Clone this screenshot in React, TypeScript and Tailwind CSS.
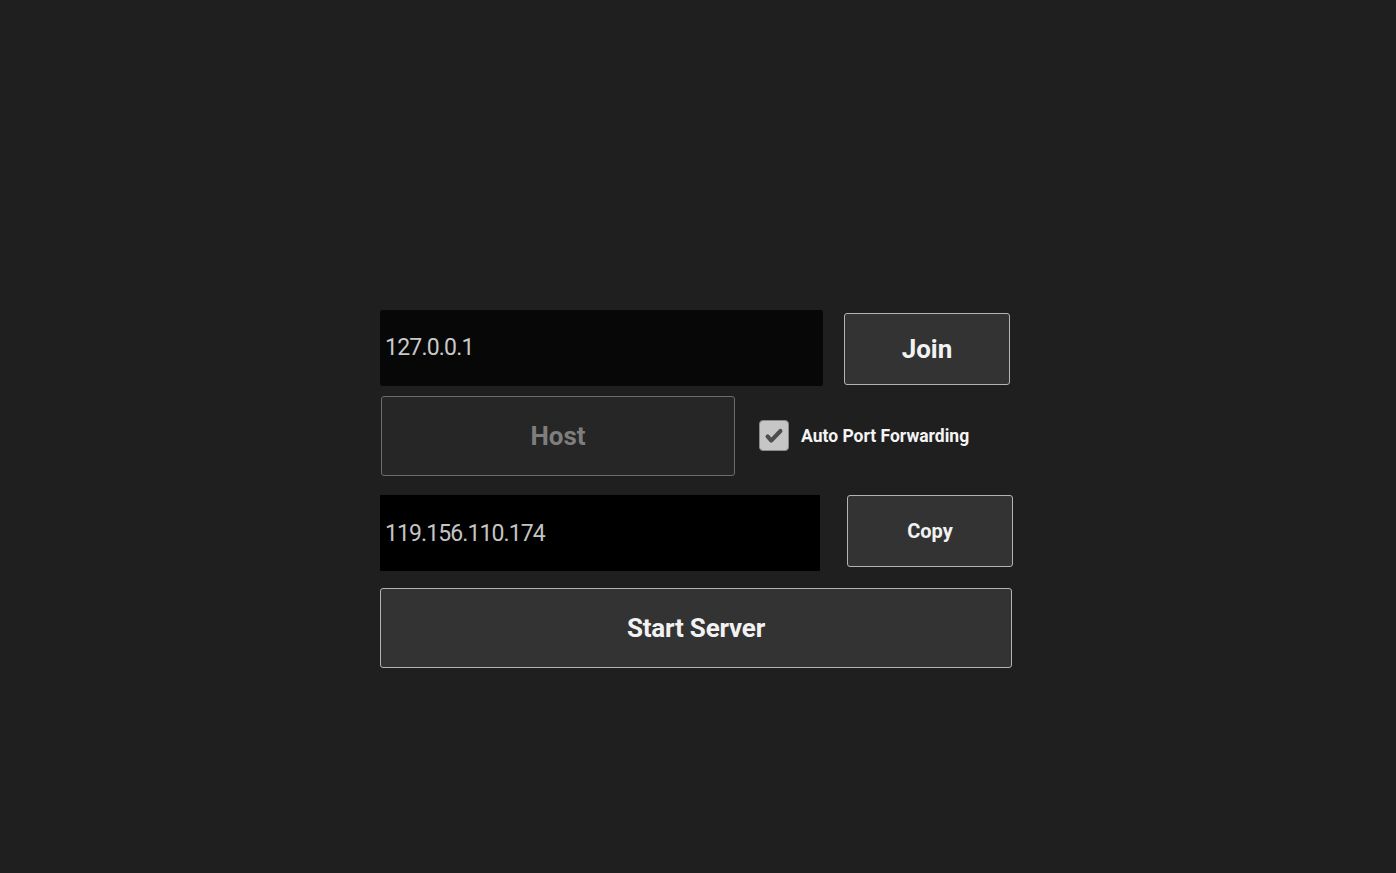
import { useState } from "react";

const font = { fontFamily: "Roboto, 'Noto Sans', sans-serif" };

function App() {
  const [address, setAddress] = useState("127.0.0.1");
  const [autoForward, setAutoForward] = useState(true);

  return (
    <div className="min-h-screen w-full bg-[#1f1f1f] pl-[380px] pt-[310px]" style={font}>
      {/* join row */}
      <div className="flex items-start">
        <div className="flex h-[76px] w-[443px] items-center rounded-[3px] bg-[#070707] pl-[5px]">
          <input
            value={address}
            onChange={(e) => setAddress(e.target.value)}
            className="w-full bg-transparent text-[23px] tracking-[-0.8px] text-[#c9c9c9] outline-none"
          />
        </div>
        <button className="ml-[21px] mt-[3px] flex h-[72px] w-[166px] items-center justify-center rounded-[3px] border border-[#b4b4b4] bg-[#333333] pt-px text-[26px] font-bold text-[#f2f2f2]">
          Join
        </button>
      </div>

      {/* host row */}
      <div className="mt-[10px] flex items-start">
        <button
          disabled
          className="ml-px flex h-[80px] w-[354px] items-center justify-center rounded-[3px] border border-[#6c6c6c] bg-[#262626] text-[26px] font-bold text-[#7e7e7e]"
        >
          Host
        </button>
        <label className="ml-[24px] mt-[24px] flex cursor-pointer items-center">
          <span
            onClick={() => setAutoForward(!autoForward)}
            className="flex h-[31px] w-[30px] items-center justify-center rounded-[4px] border border-[#8a8a8a] bg-[#c6c6c6]"
          >
            {autoForward && (
              <svg viewBox="0 0 24 24" className="h-[22px] w-[22px]">
                <path d="M5 12.5l4 4.5L19 6.5" fill="none" stroke="#4d4d4d" strokeWidth={4.5} strokeLinecap="round" strokeLinejoin="round" />
              </svg>
            )}
          </span>
          <span className="ml-[12px] mt-[2px] text-[17.5px] font-bold text-[#f4f4f4]">Auto Port Forwarding</span>
        </label>
      </div>

      {/* public ip row */}
      <div className="mt-[19px] flex items-start">
        <div className="flex h-[76px] w-[440px] items-center bg-black pl-[5px] pt-[2px]">
          <span className="text-[23px] tracking-[-0.9px] text-[#c4c4c4]">119.156.110.174</span>
        </div>
        <button className="ml-[27px] flex h-[72px] w-[166px] items-center justify-center rounded-[3px] border border-[#b4b4b4] bg-[#333333] text-[20px] font-bold text-[#f2f2f2]">
          Copy
        </button>
      </div>

      <button className="mt-[17px] flex h-[80px] w-[632px] items-center justify-center rounded-[3px] border border-[#b4b4b4] bg-[#333333] text-[26px] font-bold tracking-[-0.2px] text-[#f2f2f2]">
        Start Server
      </button>
    </div>
  );
}

export default App;
